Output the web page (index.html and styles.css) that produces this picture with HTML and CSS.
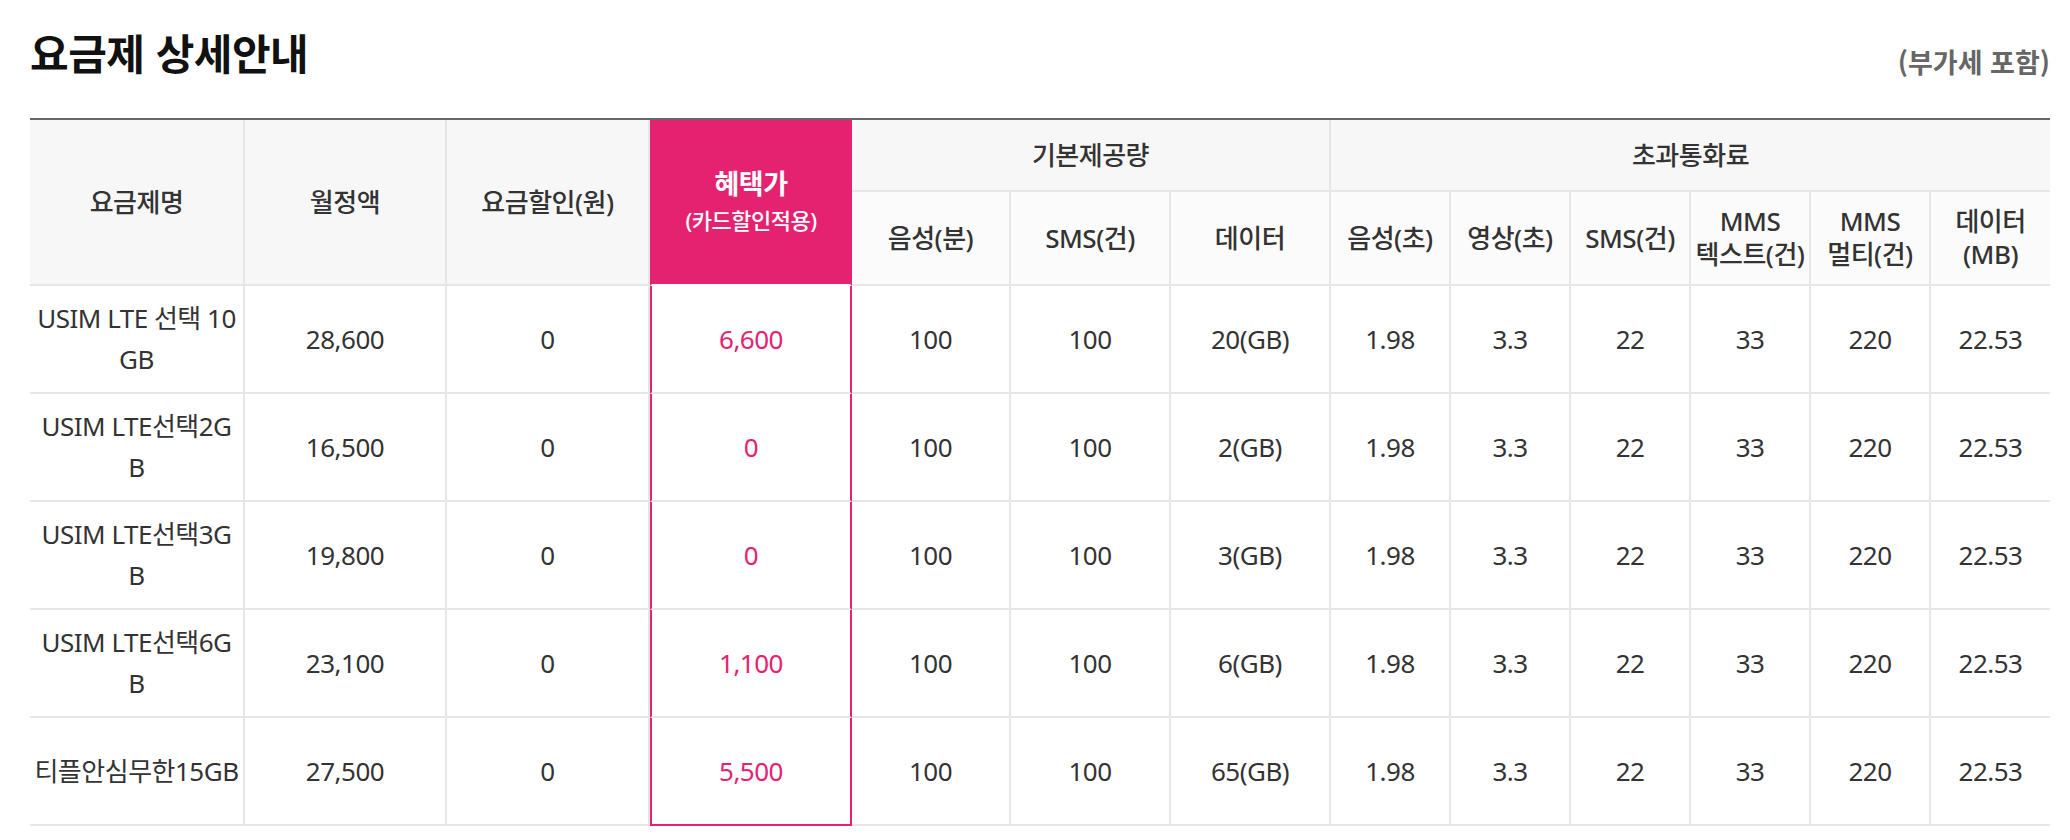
FILE: index.html
```html
<!DOCTYPE html>
<html lang="ko">
<head>
<meta charset="utf-8">
<title>요금제 상세안내</title>
<link rel="stylesheet" href="styles.css">
</head>
<body>
<div class="page">
  <div class="head">
    <h2 class="title">요금제 상세안내</h2>
    <span class="vat">(부가세 포함)</span>
  </div>
  <table class="plan">
    <colgroup>
      <col class="c-name">
      <col class="c-wide">
      <col class="c-wide2">
      <col class="c-wide">
      <col class="c-mid2">
      <col class="c-mid">
      <col class="c-mid">
      <col class="c-sm">
      <col class="c-sm">
      <col class="c-sm">
      <col class="c-sm">
      <col class="c-sm">
      <col class="c-sm2">
    </colgroup>
    <thead>
      <tr class="top">
        <th rowspan="2">요금제명</th>
        <th rowspan="2">월정액</th>
        <th rowspan="2">요금할인(원)</th>
        <th rowspan="2" class="hl"><span class="hl-main">혜택가</span><span class="hl-sub">(카드할인적용)</span></th>
        <th colspan="3" class="grp">기본제공량</th>
        <th colspan="6" class="grp last">초과통화료</th>
      </tr>
      <tr class="sub">
        <th>음성(분)</th>
        <th>SMS(건)</th>
        <th>데이터</th>
        <th>음성(초)</th>
        <th>영상(초)</th>
        <th>SMS(건)</th>
        <th>MMS<br>텍스트(건)</th>
        <th>MMS<br>멀티(건)</th>
        <th class="last">데이터<br>(MB)</th>
      </tr>
    </thead>
    <tbody>
      <tr>
        <td class="name">USIM LTE 선택 10<br>GB</td>
        <td>28,600</td>
        <td>0</td>
        <td class="hl">6,600</td>
        <td>100</td><td>100</td><td>20(GB)</td>
        <td>1.98</td><td>3.3</td><td>22</td><td>33</td><td>220</td><td class="last">22.53</td>
      </tr>
      <tr>
        <td class="name">USIM LTE선택2G<br>B</td>
        <td>16,500</td>
        <td>0</td>
        <td class="hl">0</td>
        <td>100</td><td>100</td><td>2(GB)</td>
        <td>1.98</td><td>3.3</td><td>22</td><td>33</td><td>220</td><td class="last">22.53</td>
      </tr>
      <tr>
        <td class="name">USIM LTE선택3G<br>B</td>
        <td>19,800</td>
        <td>0</td>
        <td class="hl">0</td>
        <td>100</td><td>100</td><td>3(GB)</td>
        <td>1.98</td><td>3.3</td><td>22</td><td>33</td><td>220</td><td class="last">22.53</td>
      </tr>
      <tr>
        <td class="name">USIM LTE선택6G<br>B</td>
        <td>23,100</td>
        <td>0</td>
        <td class="hl">1,100</td>
        <td>100</td><td>100</td><td>6(GB)</td>
        <td>1.98</td><td>3.3</td><td>22</td><td>33</td><td>220</td><td class="last">22.53</td>
      </tr>
      <tr class="end">
        <td class="name">티플안심무한15GB</td>
        <td>27,500</td>
        <td>0</td>
        <td class="hl">5,500</td>
        <td>100</td><td>100</td><td>65(GB)</td>
        <td>1.98</td><td>3.3</td><td>22</td><td>33</td><td>220</td><td class="last">22.53</td>
      </tr>
    </tbody>
  </table>
</div>
</body>
</html>
```

FILE: styles.css
```css
html, body {
  margin: 0;
  padding: 0;
  background: #fff;
}

body {
  font-family: "Noto Sans", "Noto Sans CJK KR", sans-serif;
  color: #333;
}

.page {
  padding: 0 20px 0 30px;
}

.head {
  display: flex;
  justify-content: space-between;
  align-items: flex-end;
  padding-top: 26px;
  margin-bottom: 40px;
}

.title {
  margin: 0;
  font-family: "Noto Sans CJK KR", sans-serif;
  font-size: 42px;
  line-height: 52px;
  font-weight: 700;
  letter-spacing: -0.5px;
  color: #111;
}

.vat {
  font-family: "Noto Sans CJK KR", sans-serif;
  font-size: 27px;
  line-height: 32px;
  font-weight: 700;
  color: #666;
}

.plan {
  width: 2020px;
  table-layout: fixed;
  border-collapse: separate;
  border-spacing: 0;
  border-top: 2px solid #666;
}

.c-name { width: 215px; }
.c-wide { width: 202px; }
.c-wide2 { width: 203px; }
.c-mid { width: 160px; }
.c-mid2 { width: 159px; }
.c-sm { width: 120px; }
.c-sm2 { width: 119px; }

.plan th,
.plan td {
  box-sizing: border-box;
  padding: 0;
  text-align: center;
  vertical-align: middle;
  border-right: 2px solid #e6e6e6;
  border-bottom: 2px solid #e6e6e6;
}

.plan .last {
  border-right: none;
}

.plan th {
  background: #f7f7f7;
  font-size: 26px;
  font-weight: 500;
  letter-spacing: -0.5px;
  line-height: 33px;
  color: #333;
}

.plan .top th {
  height: 72px;
}

.plan .sub th {
  height: 94px;
  background: #fbfbfb;
}

.plan td {
  height: 108px;
  font-size: 26px;
  line-height: 41px;
  letter-spacing: -0.5px;
  color: #333;
}

.plan td.name {
  white-space: nowrap;
  letter-spacing: -0.5px;
}

.plan .hl {
  border-left: 2px solid #e5226f;
  border-right: 2px solid #e5226f;
  color: #e5226f;
}

.plan th.hl {
  background: #e5226f;
  border-bottom-color: #fff;
  color: #fff;
}

.hl-main {
  display: block;
  font-size: 27px;
  font-weight: 700;
  line-height: 37px;
}

.hl-sub {
  display: block;
  font-size: 22px;
  font-weight: 500;
  line-height: 37px;
  letter-spacing: -0.5px;
}

.plan .end td.hl {
  border-bottom-color: #e5226f;
  box-shadow: 0 8px 8px -4px rgba(0, 0, 0, 0.12);
}
```
